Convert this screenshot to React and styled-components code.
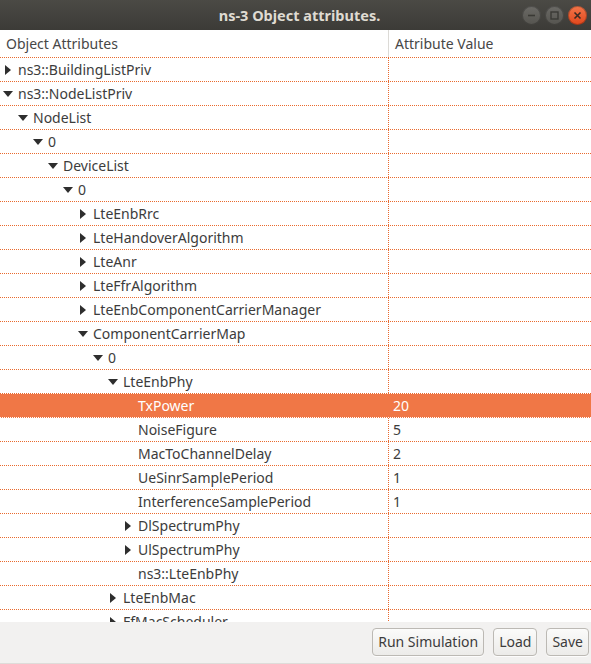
import styled, { createGlobalStyle } from 'styled-components'

const GlobalStyle = createGlobalStyle`
  html, body {
    margin: 0;
    padding: 0;
    background: #f2f1f0;
  }
  * { box-sizing: border-box; }
`

const orange = '#e96a2e'

const Window = styled.div`
  width: 591px;
  height: 664px;
  display: flex;
  flex-direction: column;
  font-family: "Noto Sans", "Open Sans", sans-serif;
  font-size: 14px;
  color: #3c3c3c;
  overflow: hidden;
`

const TitleBar = styled.div`
  height: 30px;
  flex: none;
  background: linear-gradient(#4b4a45, #3c3b37);
  display: grid;
  grid-template-columns: 1fr auto;
  align-items: center;
  padding: 0 4px 0 0;
`

const Title = styled.div`
  grid-column: 1 / 3;
  grid-row: 1;
  text-align: center;
  color: #dfdbd2;
  font-weight: bold;
  font-size: 14.5px;
  padding-left: 12px;
`

const WindowButtons = styled.div`
  grid-column: 2;
  grid-row: 1;
  display: flex;
  gap: 4px;
`

const WinButton = styled.div`
  width: 19px;
  height: 19px;
  border-radius: 50%;
  background: ${p => (p.$close ? 'linear-gradient(#f2764a, #e0461b)' : 'linear-gradient(#6b6a66, #55544f)')};
  box-shadow: inset 0 0 0 1px rgba(0, 0, 0, 0.25);
  display: flex;
  align-items: center;
  justify-content: center;
`

const Tree = styled.div`
  flex: 1;
  background: #fff;
  overflow: hidden;
`

const HeaderRow = styled.div`
  display: grid;
  grid-template-columns: 389px 1fr;
  height: 28px;
  border-bottom: 1px dotted ${orange};
`

const HeaderCell = styled.div`
  display: flex;
  align-items: center;
  padding-left: 6px;
  color: #474747;
  border-right: ${p => (p.$first ? '1px solid #dcdad6' : 'none')};
`

const Row = styled.div`
  display: grid;
  grid-template-columns: 389px 1fr;
  height: 24px;
  border-bottom: 1px dotted ${p => (p.$selected ? '#fff' : orange)};
  background: ${p => (p.$selected ? '#f07746' : '#fff')};
  color: ${p => (p.$selected ? '#fff' : '#3c3c3c')};
`

const NameCell = styled.div`
  display: flex;
  align-items: center;
  padding-left: ${p => 3 + p.$level * 15}px;
  border-right: 1px dotted ${p => (p.$selected ? '#f07746' : orange)};
  white-space: nowrap;
`

const Expander = styled.span`
  width: 15px;
  flex: none;
  display: flex;
  align-items: center;
  padding-left: ${p => (p.$open ? 0 : 2)}px;
`

const Arrow = styled.span`
  width: 0;
  height: 0;
  ${p =>
    p.$open
      ? `border-top: 6px solid #2e2e2e;
         border-left: 5px solid transparent;
         border-right: 5px solid transparent;`
      : `border-left: 6px solid #2e2e2e;
         border-top: 5px solid transparent;
         border-bottom: 5px solid transparent;`}
`

const ValueCell = styled.div`
  display: flex;
  align-items: center;
  padding-left: 4px;
`

const ButtonBar = styled.div`
  height: 42px;
  flex: none;
  background: #f2f1f0;
  display: flex;
  justify-content: flex-end;
  align-items: center;
  gap: 9px;
  padding: 0 2px 2px 0;
  border-bottom: 1px solid #dedcd9;
`

const Button = styled.button`
  font-family: inherit;
  font-size: 14px;
  color: #3c3c3c;
  height: 28px;
  padding: 0 5px;
  border: 1px solid #bcb9b4;
  border-radius: 4px;
  background: linear-gradient(#fbfbfa, #ecebe9);
  box-shadow: 0 1px 0 rgba(255, 255, 255, 0.8);
`

const rows = [
  { name: 'ns3::BuildingListPriv', level: 0, arrow: 'closed' },
  { name: 'ns3::NodeListPriv', level: 0, arrow: 'open' },
  { name: 'NodeList', level: 1, arrow: 'open' },
  { name: '0', level: 2, arrow: 'open' },
  { name: 'DeviceList', level: 3, arrow: 'open' },
  { name: '0', level: 4, arrow: 'open' },
  { name: 'LteEnbRrc', level: 5, arrow: 'closed' },
  { name: 'LteHandoverAlgorithm', level: 5, arrow: 'closed' },
  { name: 'LteAnr', level: 5, arrow: 'closed' },
  { name: 'LteFfrAlgorithm', level: 5, arrow: 'closed' },
  { name: 'LteEnbComponentCarrierManager', level: 5, arrow: 'closed' },
  { name: 'ComponentCarrierMap', level: 5, arrow: 'open' },
  { name: '0', level: 6, arrow: 'open' },
  { name: 'LteEnbPhy', level: 7, arrow: 'open' },
  { name: 'TxPower', level: 8, value: '20', selected: true },
  { name: 'NoiseFigure', level: 8, value: '5' },
  { name: 'MacToChannelDelay', level: 8, value: '2' },
  { name: 'UeSinrSamplePeriod', level: 8, value: '1' },
  { name: 'InterferenceSamplePeriod', level: 8, value: '1' },
  { name: 'DlSpectrumPhy', level: 8, arrow: 'closed' },
  { name: 'UlSpectrumPhy', level: 8, arrow: 'closed' },
  { name: 'ns3::LteEnbPhy', level: 8 },
  { name: 'LteEnbMac', level: 7, arrow: 'closed' },
  { name: 'FfMacScheduler', level: 7, arrow: 'closed' },
]

const App = () => (
  <>
    <GlobalStyle />
    <Window>
      <TitleBar>
        <Title>ns-3 Object attributes.</Title>
        <WindowButtons>
          <WinButton>
            <svg width="9" height="9" viewBox="0 0 9 9">
              <path d="M1 4.5h7" stroke="#3a3935" strokeWidth="1.6" />
            </svg>
          </WinButton>
          <WinButton>
            <svg width="9" height="9" viewBox="0 0 9 9">
              <rect x="1" y="1" width="7" height="7" fill="none" stroke="#3a3935" strokeWidth="1.4" />
            </svg>
          </WinButton>
          <WinButton $close>
            <svg width="9" height="9" viewBox="0 0 9 9">
              <path d="M1.5 1.5l6 6M7.5 1.5l-6 6" stroke="#3a2a22" strokeWidth="1.6" />
            </svg>
          </WinButton>
        </WindowButtons>
      </TitleBar>
      <Tree>
        <HeaderRow>
          <HeaderCell $first>Object Attributes</HeaderCell>
          <HeaderCell>Attribute Value</HeaderCell>
        </HeaderRow>
        {rows.map((r, i) => (
          <Row key={i} $selected={r.selected}>
            <NameCell $level={r.level} $selected={r.selected}>
              <Expander $open={r.arrow === 'open'}>
                {r.arrow && <Arrow $open={r.arrow === 'open'} />}
              </Expander>
              {r.name}
            </NameCell>
            <ValueCell>{r.value}</ValueCell>
          </Row>
        ))}
      </Tree>
      <ButtonBar>
        <Button>Run Simulation</Button>
        <Button>Load</Button>
        <Button>Save</Button>
      </ButtonBar>
    </Window>
  </>
)

export default App
